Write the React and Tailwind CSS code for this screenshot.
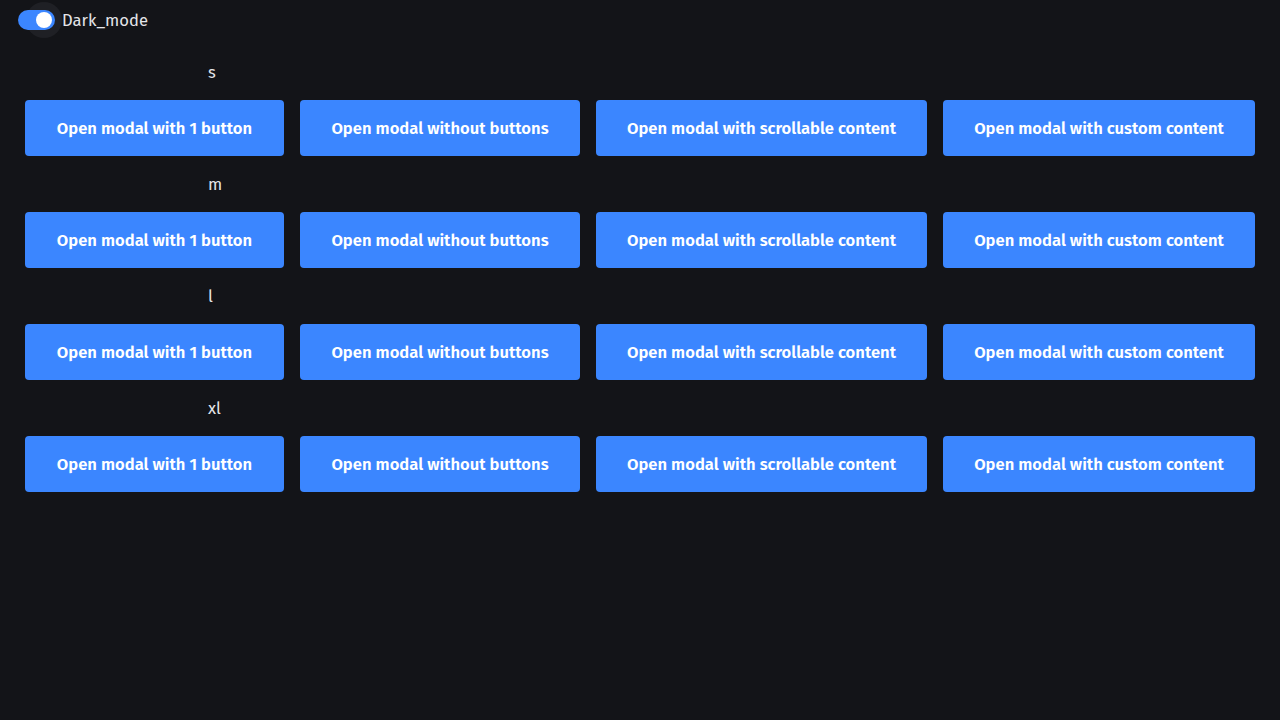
import { useState } from "react";

const SIZES = ["s", "m", "l", "xl"];

const BUTTONS = [
  { label: "Open modal with 1 button", width: "w-[259px]" },
  { label: "Open modal without buttons", width: "w-[280px]" },
  { label: "Open modal with scrollable content", width: "w-[331px]" },
  { label: "Open modal with custom content", width: "w-[312px]" },
];

function Toggle({ checked, onChange }) {
  return (
    <button onClick={() => onChange(!checked)} className="relative isolate h-5 w-[37px]">
      {/* focus halo sits behind the track */}
      <span
        className={`absolute top-1/2 -z-10 h-9 w-9 -translate-y-1/2 rounded-full bg-[#1f2025] ${
          checked ? "left-[8px]" : "left-[-8px]"
        }`}
      />
      <span
        className={`absolute inset-0 rounded-full ${checked ? "bg-[#3b86ff]" : "bg-[#4b4d55]"}`}
      />
      <span
        className={`absolute top-1/2 h-4 w-4 -translate-y-1/2 rounded-full bg-white ${
          checked ? "left-[18px]" : "left-[2px]"
        }`}
      />
    </button>
  );
}

export default function App() {
  const [dark, setDark] = useState(true);

  return (
    <div
      className="min-h-screen bg-[#131418] text-[#e4e5e9]"
      style={{ fontFamily: '"Fira Sans", "Noto Sans", sans-serif' }}
    >
      <div className="flex h-10 items-center gap-[7px] pl-[18px]">
        <Toggle checked={dark} onChange={setDark} />
        <span className="text-[16.6px]">Dark_mode</span>
      </div>

      <div className="mt-5 flex flex-col">
        {SIZES.map((size) => (
          <div key={size} className="flex flex-col gap-4 pb-4">
            <div className="pl-[208px] text-[16.6px] leading-6">{size}</div>
            <div className="flex justify-center gap-4">
              {BUTTONS.map((b) => (
                <button
                  key={b.label}
                  className={`${b.width} h-14 rounded-[4px] bg-[#3b86ff] text-[16.6px] font-semibold whitespace-nowrap text-white`}
                >
                  {b.label}
                </button>
              ))}
            </div>
          </div>
        ))}
      </div>
    </div>
  );
}
